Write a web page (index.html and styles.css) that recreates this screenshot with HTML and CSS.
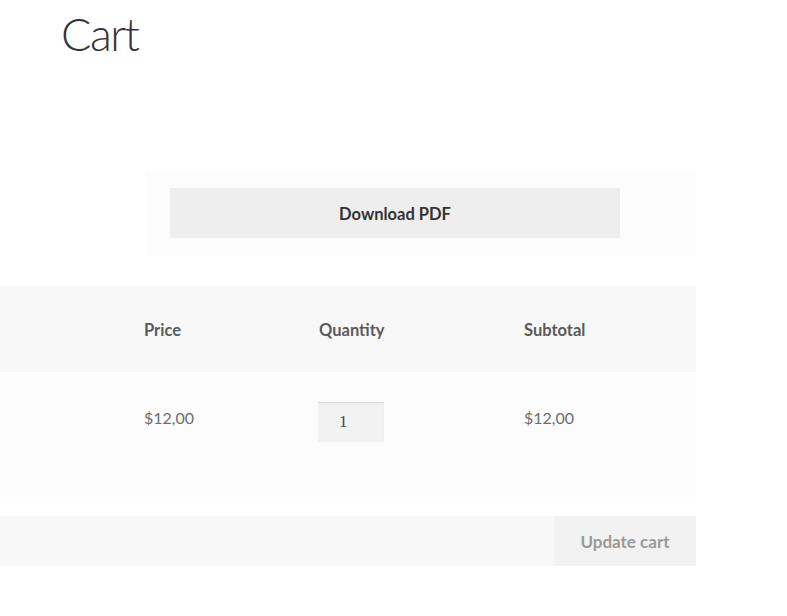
FILE: index.html
```html
<!DOCTYPE html>
<html>
<head>
<meta charset="utf-8">
<link rel="stylesheet" href="styles.css">
</head>
<body>
<div class="page">
  <h1 class="title">Cart</h1>
  <div class="pdf-box">
    <button class="pdf-btn">Download PDF</button>
  </div>
  <div class="cart-table">
    <div class="row head">
      <div class="cell"></div>
      <div class="cell">Price</div>
      <div class="cell">Quantity</div>
      <div class="cell">Subtotal</div>
    </div>
    <div class="row item">
      <div class="cell"></div>
      <div class="cell">$12,00</div>
      <div class="cell"><div class="qty">1</div></div>
      <div class="cell">$12,00</div>
    </div>
  </div>
  <div class="actions">
    <button class="update-btn">Update cart</button>
  </div>
</div>
</body>
</html>
```
FILE: styles.css
```css
html, body {
  margin: 0;
  padding: 0;
  background: #ffffff;
}
body {
  font-family: "Lato", "Open Sans", sans-serif;
  color: #6d6d6d;
}
.page {
  width: 696px;
  display: flex;
  flex-direction: column;
}
.title {
  margin: 0;
  padding: 6px 0 0 61px;
  height: 165px;
  box-sizing: border-box;
  font-weight: 300;
  font-size: 45px;
  letter-spacing: -1.5px;
  line-height: 56px;
  color: #333333;
}
.pdf-box {
  margin-top: 6px;
  margin-left: 145px;
  height: 85px;
  box-sizing: border-box;
  padding: 17px 0 0 25px;
  background: #fcfcfc;
}
.pdf-btn {
  width: 450px;
  height: 50px;
  border: 0;
  background: #eeeeee;
  font-family: inherit;
  font-weight: 700;
  font-size: 16.5px;
  color: #333333;
  padding: 2px 0 0 0;
}
.cart-table {
  margin-top: 30px;
  display: flex;
  flex-direction: column;
  gap: 1px;
}
.row {
  display: grid;
  grid-template-columns: 144px 175px 205px 1fr;
}
.row.head {
  height: 86px;
  background: #f8f8f8;
  align-items: center;
  font-weight: 700;
  font-size: 16.5px;
  color: #5a5a5a;
}
.row.head .cell {
  padding-top: 2px;
}
.row.item {
  height: 124px;
  background: #fcfcfc;
  align-items: start;
  font-size: 16px;
  color: #6d6d6d;
}
.row.item .cell {
  padding-top: 35px;
}
.row.item .cell:has(.qty) {
  padding-top: 29px;
}
.qty {
  width: 66px;
  height: 40px;
  box-sizing: border-box;
  background: #f2f2f2;
  box-shadow: inset 0 1px 1px rgba(0, 0, 0, 0.125);
  color: #43454b;
  font-family: "Liberation Serif", serif;
  font-size: 17px;
  line-height: 40px;
  padding-left: 21px;
  margin-left: -1px;
}
.actions {
  margin-top: 19px;
  height: 50px;
  background: #f8f8f8;
  display: flex;
  justify-content: flex-end;
}
.update-btn {
  width: 142px;
  height: 50px;
  border: 0;
  padding: 0;
  background: #f2f2f2;
  font-family: inherit;
  font-weight: 700;
  font-size: 17px;
  color: #9a9a9a;
}
```
